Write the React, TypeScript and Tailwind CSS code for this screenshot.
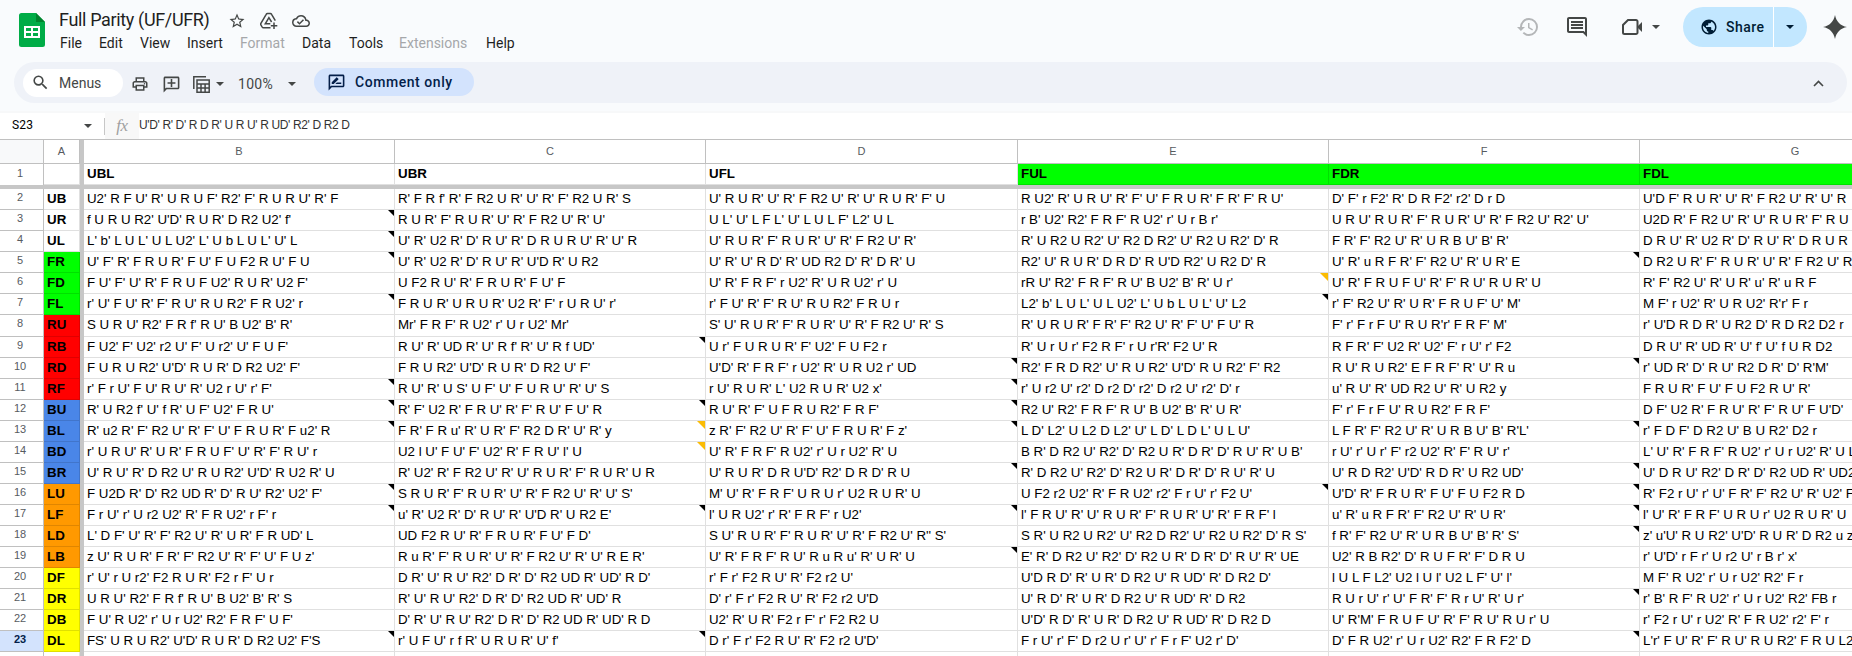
import React from "react";
import {
  MdStarBorder,
  MdOutlineCloudDone,
  MdSearch,
  MdOutlinePrint,
  MdOutlineAddComment,
  MdOutlineRateReview,
  MdHistory,
  MdOutlineComment,
  MdPublic,
} from "react-icons/md";

type Row = { n: number; key: string; fill: string; cells: string[]; notes?: string };

const WHITE = "bg-white";
const GREEN = "bg-[#00ff00]";
const RED = "bg-[#ff0000]";
const BLUE = "bg-[#4a86e8]";
const ORANGE = "bg-[#ff9900]";
const YELLOW = "bg-[#ffff00]";

// notes: one character per column B..G; "k" is a black note mark, "o" an orange comment mark
const ROWS: Row[] = [
  { n: 2, key: "UB", fill: WHITE, cells: ["U2' R F U' R' U R U F' R2' F' R U R U' R' F", "R' F R f' R' F R2 U R' U' R' F' R2 U R' S", "U' R U R' U' R' F R2 U' R' U' R U R' F' U", "R U2' R' U R U' R' F' U' F R U R' F R' F' R U'", "D' F' r F2' R' D R F2' r2' D r D", "U'D F' R U R' U' R' F R2 U' R' U' R"] },
  { n: 3, key: "UR", fill: WHITE, notes: "k", cells: ["f U R U R2' U'D' R U R' D R2 U2' f'", "R U R' F' R U R' U' R' F R2 U' R' U'", "U L' U' L F L' U' L U L F' L2' U L", "r B' U2' R2' F R F' R U2' r' U r B r'", "U R U' R U R' F' R U R' U' R' F R2 U' R2' U'", "U2D R' F R2 U' R' U' R U R' F' R U"] },
  { n: 4, key: "UL", fill: WHITE, notes: "k", cells: ["L' b' L U L' U L U2' L' U b L U L' U' L", "U' R' U2 R' D' R U' R' D R U R U' R' U' R", "U' R U R' F' R U R' U' R' F R2 U' R'", "R' U R2 U R2' U' R2 D R2' U' R2 U R2' D' R", "F R' F' R2 U' R' U R B U' B' R'", "D R U' R' U2 R' D' R U' R' D R U R"] },
  { n: 5, key: "FR", fill: GREEN, notes: "k...k", cells: ["U' F' R' F R U R' F U' F U F2 R U' F U", "U' R' U2 R' D' R U' R' U'D R' U R2", "U' R' U' R D' R' UD R2 D' R' D R' U", "R2' U' R U R' D R D' R U'D R2' U R2 D' R", "U' R' u R F R' F' R2 U' R' U R' E", "D R2 U R' F' R U R' U' R' F R2 U' R"] },
  { n: 6, key: "FD", fill: GREEN, notes: "...o", cells: ["F U' F' U' R' F R U F U2' R U R' U2 F'", "U F2 R U' R' F R U R' F U' F", "U' R' F R F' r U2' R' U R U2' r' U", "rR U' R2' F R F' R U' B U2' B' R' U r'", "U' R' F R U F U' R' F' R U' R U R' U", "R' F' R2 U' R' U R' u' R' u R F"] },
  { n: 7, key: "FL", fill: GREEN, notes: "k..k", cells: ["r' U' F U' R' F' R U' R U R2' F R U2' r", "F R U R' U R U R' U2 R' F' r U R U' r'", "r' F U' R' F' R U' R U R2' F R U r", "L2' b' L U L' U L U2' L' U b L U L' U' L2", "r' F' R2 U' R' U R' F R U F' U' M'", "M F' r U2' R' U R U2' R'r' F r"] },
  { n: 8, key: "RU", fill: RED, cells: ["S U R U' R2' F R f' R U' B U2' B' R'", "Mr' F R F' R U2' r' U r U2' Mr'", "S' U' R U R' F' R U R' U' R' F R2 U' R' S", "R' U R U R' F R' F' R2 U' R' F' U' F U' R", "F' r' F r F U' R U R'r' F R F' M'", "r' U'D R D R' U R2 D' R D R2 D2 r"] },
  { n: 9, key: "RB", fill: RED, notes: ".k", cells: ["F U2' F' U2' r2 U' F' U r2' U' F U F'", "R U' R' UD R' U' R f' R' U' R f UD'", "U r' F U R U R' F' U2' F U F2 r", "R' U r U r' F2 R F' r U r'R' F2 U' R", "R F R' F' U2 R' U2' F' r U' r' F2", "D R U' R' UD R' U' f' U' f U R D2"] },
  { n: 10, key: "RD", fill: RED, notes: "..k.k", cells: ["F U R U R2' U'D' R U R' D R2 U2' F'", "F R U R2' U'D' R U R' D R2 U' F'", "U'D' R' F R F' r U2' R' U R U2 r' UD", "R2' F R D R2' U' R U R2' U'D' R U R2' F' R2", "R U' R U R2' E F R F' R' U' R u", "r' UD R' D' R U' R2 D R' D' R'M'"] },
  { n: 11, key: "RF", fill: RED, notes: "k.k", cells: ["r' F r U' F U' R U' R' U2 r U' r' F'", "R U' R' U S' U F' U' F U R U' R' U' S", "r U' R U R' L' U2 R U R' U2 x'", "r' U r2 U' r2' D r2 D' r2' D r2 U' r2' D' r", "u' R U' R' UD R2 U' R' U R2 y", "F R U R' F U' F U F2 R U' R'"] },
  { n: 12, key: "BU", fill: BLUE, notes: "kkk", cells: ["R' U R2 f' U' f R' U F' U2' F R U'", "R' F' U2 R' F R U' R' F' R U' F U' R", "R U' R' F' U F R U R2' F R F'", "R2 U' R2' F R F' R U' B U2' B' R' U R'", "F' r' F r F U' R U R2' F R F'", "D F' U2 R' F R U' R' F' R U' F U'D'"] },
  { n: 13, key: "BL", fill: BLUE, notes: "kok.k", cells: ["R' u2 R' F' R2 U' R' F' U' F R U R' F u2' R", "F R' F R u' R' U R' F' R2 D R' U' R' y", "z R' F' R2 U' R' F' U' F R U R' F z'", "L D' L2' U L2 D L2' U' L D' L D L' U L U'", "L F R' F' R2 U' R' U R B U' B' R'L'", "r' F D F' D R2 U' B U R2' D2 r"] },
  { n: 14, key: "BD", fill: BLUE, notes: ".o", cells: ["r' U R U' R' U R' F R U F' U' R' F' R U' r", "U2 l U' F U' F' U2' R' F R U' l' U", "U' R' F R F' R U2' r' U r U2' R' U", "B R' D R2 U' R2' D' R2 U R' D R' D' R U' R' U B'", "r U' r' U r' F' r2 U2' R' F' R U' r'", "L' U' R' F R F' R U2' r' U r U2' R' U L"] },
  { n: 15, key: "BR", fill: BLUE, notes: "..k.k", cells: ["U' R U' R' D R2 U' R U R2' U'D' R U2 R' U", "R' U2' R' F R2 U' R' U' R U R' F' R U R' U R", "U' R U R' D R U'D' R2' D R D' R U", "R' D R2 U' R2' D' R2 U R' D R' D' R U' R' U", "U' R D R2' U'D' R D R' U R2 UD'", "U' D R U' R2' D R' D' R2 UD R' UD2"] },
  { n: 16, key: "LU", fill: ORANGE, notes: "k..kk", cells: ["F U2D R' D' R2 UD R' D' R U' R2' U2' F'", "S R U R' F' R U R' U' R' F R2 U' R' U' S'", "M' U' R' F R F' U R U r' U2 R U R' U", "U F2 r2 U2' R' F R U2' r2' F r U' r' F2 U'", "U'D' R' F R U R' F U' F U F2 R D", "R' F2 r U' r' U' F R' F' R2 U' R' U2' F"] },
  { n: 17, key: "LF", fill: ORANGE, notes: "kkk.k", cells: ["F r U' r' U r2 U2' R' F R U2' r F' r", "u' R' U2 R' D' R U' R' U'D R' U R2 E'", "l' U R U2' r' R' F R F' r U2'", "l' F R U' R' U' R U R' F' R U R' U' R' F R F' l", "u' R' u R F R' F' R2 U' R' U R'", "l' U' R' F R F' U R U r' U2 R U R' U"] },
  { n: 18, key: "LD", fill: ORANGE, notes: "....k", cells: ["L' D F' U' R' F' R2 U' R' U R' F R UD' L", "UD F2 R U' R' F R U R' F U' F D'", "S U' R U R' F' R U R' U' R' F R2 U' R'' S'", "S R' U R2 U R2' U' R2 D R2' U' R2 U R2' D' R S'", "f R' F' R2 U' R' U R B U' B' R' S'", "z' u'U' R U R2' U'D' R U R' D R2 u z"] },
  { n: 19, key: "LB", fill: ORANGE, notes: "..k", cells: ["z U' R U R' F R' F' R2 U' R' F' U' F U z'", "R u R' F' R U R' U' R' F R2 U' R' U' R E R'", "U' R' F R F' R U' R u R u' R' U R' U", "E' R' D R2 U' R2' D' R2 U R' D R' D' R U' R' UE", "U2' R B R2' D' R U F R' F' D R U", "r' U'D' r F r' U r2 U' r B r' x'"] },
  { n: 20, key: "DF", fill: YELLOW, cells: ["r' U' r U r2' F2 R U R' F2 r F' U r", "D R' U' R U' R2' D R' D' R2 UD R' UD' R D'", "r' F r' F2 R U' R' F2 r2 U'", "U'D R D' R' U R' D R2 U' R UD' R' D R2 D'", "l U L F L2' U2 l U l' U2 L F' U' l'", "M F' R U2' r' U r U2' R2' F r"] },
  { n: 21, key: "DR", fill: YELLOW, notes: "....k", cells: ["U R U' R2' F R f' R U' B U2' B' R' S", "R' U' R U' R2' D R' D' R2 UD R' UD' R", "D' r' F r' F2 R U' R' F2 r2 U'D", "U' R D' R' U R' D R2 U' R UD' R' D R2", "R U r U' r' U' F R' F' R r U' R' U r'", "r' B' R F' R U2' r' U r U2' R2' FB r"] },
  { n: 22, key: "DB", fill: YELLOW, cells: ["F U' R U2' r' U r U2' R2' F R F' U F'", "D' R' U' R U' R2' D R' D' R2 UD R' UD' R D", "U2' R' U R' F2 r F' r' F2 R2 U", "U'D' R D' R' U R' D R2 U' R UD' R' D R2 D", "U' R'M' F R U F U' R' F' R U' R U r' U", "r' F2 r U' r U2' R' F R U2' r2' F' r"] },
  { n: 23, key: "DL", fill: YELLOW, notes: "kk..k", cells: ["FS' U R U R2' U'D' R U R' D R2 U2' F'S", "r' U F U' r f R' U R U R' U' f'", "D r' F r' F2 R U' R' F2 r2 U'D'", "F r U' r' F' D r2 U r' U' r' F r F' U2 r' D'", "D' F R U2' r' U r U2' R2' F R F2' D", "L'r' F U' R' F' R U' R U R2' F R U L2"] },
  { n: 24, key: "", fill: WHITE, cells: ["", "", "", "", "", ""] },
];

const COL_W = ["w-[311px]", "w-[311px]", "w-[312px]", "w-[311px]", "w-[311px]", "w-[212px]"];
const LETTERS = ["B", "C", "D", "E", "F", "G"];
const HEADS = ["UBL", "UBR", "UFL", "FUL", "FDR", "FDL"];

const MENUS: { t: string; w: string; off?: boolean }[] = [
  { t: "File", w: "w-[39px]" },
  { t: "Edit", w: "w-[41px]" },
  { t: "View", w: "w-[47px]" },
  { t: "Insert", w: "w-[53px]" },
  { t: "Format", w: "w-[62px]", off: true },
  { t: "Data", w: "w-[47px]" },
  { t: "Tools", w: "w-[50px]" },
  { t: "Extensions", w: "w-[87px]", off: true },
  { t: "Help", w: "w-[40px]" },
];

function Caret({ className = "" }: { className?: string }) {
  return (
    <svg width="8" height="4" viewBox="0 0 8 4" className={`shrink-0 ${className}`}>
      <path d="M0 0h8L4 4z" fill="currentColor" />
    </svg>
  );
}

function SheetsLogo() {
  return (
    <svg width="26" height="34" viewBox="0 0 26 34" className="shrink-0">
      <path d="M2.500 0H17l9 9v22.500a2.500 2.500 0 0 1-2.500 2.500h-21A2.500 2.500 0 0 1 0 31.500v-29A2.500 2.500 0 0 1 2.500 0z" fill="#00ac47" />
      <path d="M17 0l9 9h-9z" fill="#00832d" />
      <path d="M5 13h16v12H5zM7 15v3h5v-3zm7 0v3h5v-3zM7 20v3h5v-3zm7 0v3h5v-3z" fill="#fff" fillRule="evenodd" />
    </svg>
  );
}

function DriveAdd() {
  return (
    <svg width="18" height="18" viewBox="0 0 18 18" className="mr-[14px] shrink-0" fill="none" stroke="currentColor" strokeWidth="1.500">
      <path d="M10.500 15.800H3.400a1.500 1.500 0 0 1-1.300-.8L.9 12.900a1.500 1.500 0 0 1 0-1.500L6.200 2.300a1.500 1.500 0 0 1 1.300-.8h2.800a1.500 1.500 0 0 1 1.300.8L15.300 8.700" />
      <path d="M10.300 11.800H5.300L8.900 5.700L11.600 10" />
      <path d="M14 10.500v6.500M10.800 13.700h6.500" />
    </svg>
  );
}

function Header() {
  return (
    <div className="flex h-[62px] w-full">
      <div className="ml-[19px] mt-[13px] w-[40px]">
        <SheetsLogo />
      </div>
      <div className="flex flex-1 flex-col">
        <div className="mt-[8px] flex h-[25px] items-center text-[#444746]">
          <span className="-mt-[2px] w-[169px] text-[18px] leading-[25px] tracking-[-0.35px] text-[#1f1f1f]">Full Parity (UF/UFR)</span>
          <MdStarBorder size={18} className="mr-[14px]" />
          <DriveAdd />
          <MdOutlineCloudDone size={18} />
        </div>
        <div className="ml-px flex h-[20px] items-center text-[14px] leading-[20px]">
          {MENUS.map((m) => (
            <span key={m.t} className={`${m.w} ${m.off ? "text-[#a5a7aa]" : "text-[#1f1f1f]"}`}>
              {m.t}
            </span>
          ))}
        </div>
      </div>
      <div className="flex h-[54px] items-center text-[#444746]">
        <MdHistory size={24} className="mr-[25px] text-[#b4b6b8]" />
        <MdOutlineComment size={24} className="mr-[33px]" />
        <svg width="20" height="16" viewBox="0 0 20 16" className="mr-[10px]">
          <path d="M6 1h8a1.500 1.500 0 0 1 1.500 1.500v11A1.500 1.500 0 0 1 14 15H2.500A1.500 1.500 0 0 1 1 13.500V6z" fill="none" stroke="currentColor" strokeWidth="2" />
          <path d="M15.500 7.500L20 3v10l-4.500-4.500z" fill="currentColor" />
        </svg>
        <Caret className="mr-[23px]" />
        <div className="flex h-[40px] w-[124px] items-center rounded-full bg-[#c2e7ff] text-[#001d35]">
          <MdPublic size={18} className="ml-[17px] mr-[8px]" />
          <span className="w-[47px] text-[14px] font-medium tracking-[0.5px]">Share</span>
          <div className="h-full w-px bg-white" />
          <Caret className="ml-[12px]" />
        </div>
        <svg width="24" height="24" viewBox="0 0 24 24" className="ml-[16px] mr-[5px]">
          <path d="M12 0C13.200 6.500 17.500 10.800 24 12C17.500 13.200 13.200 17.500 12 24C10.800 17.500 6.500 13.200 0 12C6.500 10.800 10.800 6.500 12 0z" fill="currentColor" />
        </svg>
      </div>
    </div>
  );
}

function Toolbar() {
  return (
    <div className="ml-[14px] flex h-[41px] w-[1833px] items-center rounded-full bg-[#eff2f8] pl-[9px] text-[#444746]">
      <div className="flex h-[28px] w-[100px] items-center rounded-full bg-white">
        <MdSearch size={19} className="ml-[8px] mr-[9px]" />
        <span className="text-[14px] leading-[20px]">Menus</span>
      </div>
      <MdOutlinePrint size={18} className="ml-[8px] mt-[3px]" />
      <MdOutlineAddComment size={19} className="ml-[13px] mt-[3px] -scale-x-100" />
      <svg width="17" height="17" viewBox="0 0 17 17" className="ml-[12px] mt-[3px]" fill="none" stroke="currentColor" strokeWidth="1.500">
        <path d="M0.800 13V0.800H13" />
        <path d="M4 4h12.200v12.200H4zM4 8h12.200M4 12.100h12.200M8 8v8M12.100 8v8" />
      </svg>
      <Caret className="ml-[6px] mt-[3px]" />
      <span className="ml-[14px] mt-[3px] w-[50px] text-[14px] leading-[20px] tracking-[0.3px]">100%</span>
      <Caret className="mt-[3px]" />
      <div className="-mt-px ml-[18px] flex h-[28px] w-[160px] items-center rounded-full bg-[#d3e3fd] text-[#041e49]">
        <MdOutlineRateReview size={19} className="ml-[13px] mr-[9px]" />
        <span className="text-[14px] font-medium leading-[20px] tracking-[0.55px]">Comment only</span>
      </div>
      <svg width="11" height="7" viewBox="0 0 11 7" className="ml-auto mr-[23px] mt-[1px]" fill="none" stroke="currentColor" strokeWidth="1.600">
        <path d="M1 6l4.500-4.500L10 6" />
      </svg>
    </div>
  );
}

function FormulaBar() {
  return (
    <div className="flex h-[27px] shrink-0 items-center border-b border-[#c0c0c0] bg-white">
      <span className="-mt-[2px] ml-[12px] w-[72px] text-[12px] leading-[16px] tracking-[0.2px] text-black">S23</span>
      <Caret className="mr-[12px] text-[#444746]" />
      <div className="h-[17px] w-px bg-[#c7c7c7]" />
      <div className="flex h-full w-[34px] items-center justify-center bg-[#f8f8f8]">
        <span className="font-['Liberation_Serif',serif] text-[17px] italic leading-[16px] tracking-[-0.5px] text-[#a0a0a0]">fx</span>
      </div>
      <span className="-mt-[2px] whitespace-pre font-['Liberation_Sans',sans-serif] text-[12px] leading-[16px] tracking-[-0.37px] text-[#333]">U'D' R' D' R D R' U R U' R UD' R2' D R2 D</span>
    </div>
  );
}

function Mark({ kind }: { kind?: string }) {
  if (kind === "k")
    return (
      <svg width="6" height="6" viewBox="0 0 6 6" className="shrink-0 self-start">
        <path d="M0 0h6v6z" fill="#000" />
      </svg>
    );
  if (kind === "o")
    return (
      <svg width="8" height="8" viewBox="0 0 8 8" className="shrink-0 self-start">
        <path d="M0 0h8v8z" fill="#fbbc04" />
      </svg>
    );
  return null;
}

function Grid() {
  return (
    <div className="flex w-full shrink-0 flex-col font-['Liberation_Sans',sans-serif]">
      <div className="flex h-[24px] text-center text-[11px] leading-[22px] text-[#575b5f]">
        <div className="w-[44px] border-b border-r border-[#c0c0c0] bg-[#f8f9fa]" />
        <div className="w-[36px] border-b border-r border-[#c0c0c0]">A</div>
        <div className="w-[4px] bg-[#c7c7c7]" />
        {LETTERS.map((l, i) => (
          <div key={l} className={`${COL_W[i]} shrink-0 border-b border-[#c0c0c0] ${i < 5 ? "border-r" : "flex justify-center"}`}>
            {i < 5 ? l : <span className="ml-[98px]">{l}</span>}
          </div>
        ))}
      </div>
      <div className="flex h-[21px] text-[13.33px] font-bold leading-[19px] text-black">
        <div className="w-[44px] border-r border-[#c0c0c0] pr-[3px] text-center text-[11px] font-normal leading-[18px] text-[#575b5f]">1</div>
        <div className="w-[36px] border-b border-r border-black/12" />
        <div className="w-[4px] bg-[#c7c7c7]" />
        {HEADS.map((h, i) => (
          <div key={h} className={`${COL_W[i]} shrink-0 border-b border-black/12 pl-[3px] ${i > 2 ? "bg-[#00ff00]" : ""} ${i < 5 ? "border-r" : ""}`}>
            {h}
          </div>
        ))}
      </div>
      <div className="h-[4px] w-full bg-[#c7c7c7]" />
      {ROWS.map((r) => (
        <div key={r.n} className={`flex ${r.n === 8 ? "h-[22px]" : "h-[21px]"} shrink-0 text-[13.33px] leading-[19px] text-black`}>
          <div className={`w-[44px] border-b border-r border-[#c0c0c0] pr-[3px] text-center text-[11px] leading-[17px] ${r.n === 23 ? "bg-[#d3e3fd] font-bold text-[#041e49]" : "text-[#575b5f]"}`}>
            {r.n < 24 ? r.n : ""}
          </div>
          <div className={`w-[36px] border-b border-r border-black/12 pl-[3px] font-bold ${r.fill}`}>{r.key}</div>
          <div className="w-[4px] bg-[#c7c7c7]" />
          {r.cells.map((c, i) => (
            <div key={i} className={`${COL_W[i]} flex shrink-0 items-start border-b border-black/12 pl-[3px] tracking-[-0.02px] ${i < 5 ? "border-r" : "overflow-hidden"}`}>
              <span className="flex-1 whitespace-pre">{c}</span>
              <Mark kind={r.notes?.[i]} />
            </div>
          ))}
        </div>
      ))}
    </div>
  );
}

export default function App() {
  return (
    <div className="flex h-[656px] w-[1852px] flex-col overflow-hidden bg-white font-['Roboto',sans-serif]">
      <div className="flex h-[111px] shrink-0 flex-col bg-[#f9fbfd]">
        <Header />
        <Toolbar />
      </div>
      <div className="h-[2px] shrink-0 bg-[#f7f8f9]" />
      <FormulaBar />
      <Grid />
    </div>
  );
}
